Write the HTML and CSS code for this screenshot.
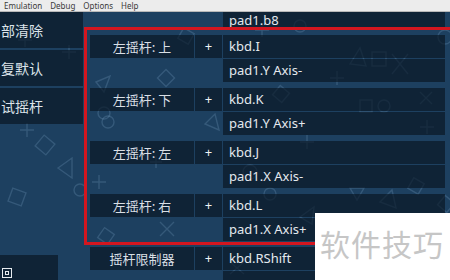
FILE: index.html
```html
<!DOCTYPE html>
<html lang="zh-CN">
<head>
    <meta charset="UTF-8">
    <title>Controls</title>
    <link rel="stylesheet" href="styles.css">
</head>
<body>
    <div class="menubar">
        <span>Emulation</span>
        <span>Debug</span>
        <span>Options</span>
        <span>Help</span>
    </div>
    <div class="main">
        <svg class="pattern" viewBox="0 0 450 268" width="450" height="268">
            <g fill="none" stroke="rgba(150,190,225,0.2)" stroke-width="1.4">
                <path d="M18 28 L32 28 M25 21 L25 35"/>
                <path d="M20 118 L34 118 M27 111 L27 125"/>
                <rect x="38" y="126" width="14" height="14" transform="rotate(40 45 133)"/>
                <path d="M58 156 L72 146 L72 166 Z"/>
                <rect x="10" y="178" width="14" height="14" transform="rotate(20 17 185)"/>
                <path d="M62 40 L76 40 M69 33 L69 47"/>
                <circle cx="104" cy="101" r="6"/>
                <circle cx="108" cy="110" r="6"/>
                <path d="M96 70 L110 64 L104 80 Z"/>
                <rect x="160" y="60" width="12" height="12" transform="rotate(45 166 66)"/>
                <rect x="180" y="18" width="12" height="12" transform="rotate(30 186 24)"/>
                <path d="M92 170 L106 170 M99 163 L99 177"/>
                <circle cx="80" cy="178" r="6"/>
                <path d="M205 112 L215 102 L219 118 Z"/>
                <path d="M160 210 L174 224 M174 210 L160 224"/>
                <rect x="100" y="218" width="12" height="12" transform="rotate(35 106 224)"/>
                <path d="M255 18 L269 18 M262 11 L262 25"/>
                <circle cx="300" cy="14" r="6"/>
                <rect x="372" y="40" width="14" height="14"/>
                <path d="M350 52 L360 36 L366 54 Z"/>
                <path d="M392 42 L408 62 M408 42 L392 62"/>
                <circle cx="445" cy="25" r="7"/>
                <rect x="275" y="76" width="12" height="12" transform="rotate(40 281 82)"/>
                <path d="M330 66 L344 66 M337 59 L337 73"/>
                <rect x="360" y="88" width="12" height="12"/>
                <circle cx="384" cy="94" r="6"/>
                <path d="M420 80 L432 92 M432 80 L420 92"/>
                <path d="M300 130 L314 130 M307 123 L307 137"/>
                <circle cx="250" cy="160" r="7"/>
                <path d="M420 115 L434 115 M427 108 L427 122"/>
                <path d="M350 176 L364 176 L357 188 Z"/>
                <rect x="410" y="168" width="12" height="12" transform="rotate(30 416 174)"/>
                <circle cx="270" cy="182" r="6"/>
                <path d="M300 205 L314 195 L312 212 Z"/>
                <path d="M380 190 L392 178 L396 196 Z"/>
                <rect x="440" y="186" width="12" height="12" transform="rotate(40 446 192)"/>
                <path d="M150 150 L162 150 M156 144 L156 156"/>
                <circle cx="160" cy="245" r="6"/>
                <path d="M230 250 L244 262 M244 250 L230 262"/>
            </g>
        </svg>
        <div class="sidebar">
            <div class="side-btn">部清除</div>
            <div class="side-btn">复默认</div>
            <div class="side-btn">试摇杆</div>
            <div class="side-bottom">
                <span class="restore-icon"></span>
            </div>
        </div>
        <div class="binds">
            <div class="group tail">
                <div class="bind-values">
                    <div class="val partial">pad1.b8</div>
                </div>
            </div>
            <div class="group">
                <div class="bind-label">左摇杆: 上</div>
                <div class="bind-add">+</div>
                <div class="bind-values">
                    <div class="val">kbd.I</div>
                    <div class="val">pad1.Y Axis-</div>
                </div>
            </div>
            <div class="group">
                <div class="bind-label">左摇杆: 下</div>
                <div class="bind-add">+</div>
                <div class="bind-values">
                    <div class="val">kbd.K</div>
                    <div class="val">pad1.Y Axis+</div>
                </div>
            </div>
            <div class="group">
                <div class="bind-label">左摇杆: 左</div>
                <div class="bind-add">+</div>
                <div class="bind-values">
                    <div class="val">kbd.J</div>
                    <div class="val">pad1.X Axis-</div>
                </div>
            </div>
            <div class="group">
                <div class="bind-label">左摇杆: 右</div>
                <div class="bind-add">+</div>
                <div class="bind-values">
                    <div class="val">kbd.L</div>
                    <div class="val">pad1.X Axis+</div>
                </div>
            </div>
            <div class="group">
                <div class="bind-label">摇杆限制器</div>
                <div class="bind-add">+</div>
                <div class="bind-values">
                    <div class="val">kbd.RShift</div>
                    <div class="val"></div>
                </div>
            </div>
        </div>
        <div class="highlight"></div>
        <div class="watermark">软件技巧</div>
    </div>
</body>
</html>
```

FILE: styles.css
```css
body {
    margin: 0;
    width: 450px;
    height: 280px;
    overflow: hidden;
    font-family: 'Noto Sans', 'Noto Sans CJK SC', sans-serif;
    background-color: #1d4060;
}
.menubar {
    height: 11px;
    background-color: #ececec;
    border-bottom: 1px solid #b9b9b9;
    padding-left: 4px;
    font-size: 8px;
    line-height: 11px;
    color: #3a3a3a;
    display: flex;
    gap: 8px;
}
.main {
    position: relative;
    height: 268px;
    display: flex;
    gap: 7px;
    overflow: hidden;
    background-color: #1d4060;
}
.pattern {
    position: absolute;
    left: 0;
    top: 0;
}
.sidebar {
    position: relative;
    width: 83px;
    flex-shrink: 0;
    display: flex;
    flex-direction: column;
    gap: 2px;
}
.side-btn {
    height: 36px;
    line-height: 36px;
    padding-left: 1px;
    font-family: 'Noto Sans CJK SC', sans-serif;
    font-size: 14px;
    color: #dde4ea;
    background-color: rgba(8, 20, 33, 0.65);
    white-space: nowrap;
}
.side-bottom {
    margin-top: auto;
    width: 58px;
    height: 25px;
    background-color: rgba(8, 20, 33, 0.65);
    display: flex;
    align-items: flex-end;
    padding: 0 0 2px 2px;
    box-sizing: border-box;
}
.restore-icon {
    width: 8px;
    height: 8px;
    border: 1px solid #e6ebef;
    display: flex;
    align-items: center;
    justify-content: center;
}
.restore-icon::after {
    content: '';
    width: 4px;
    height: 4px;
    border: 1px solid #e6ebef;
    box-sizing: border-box;
}
.binds {
    position: relative;
    flex: 1;
    display: flex;
    flex-direction: column;
    gap: 6px;
}
.group {
    display: flex;
    gap: 1px;
    align-items: flex-start;
}
.group.tail {
    padding-left: 133px;
}
.bind-label {
    width: 104px;
    height: 23px;
    line-height: 23px;
    text-align: center;
    font-family: 'Noto Sans CJK SC', sans-serif;
    font-size: 13px;
    color: #d9dfe5;
    background-color: rgba(8, 20, 33, 0.65);
}
.bind-add {
    width: 27px;
    height: 23px;
    line-height: 22px;
    text-align: center;
    font-size: 13px;
    color: #eef2f5;
    background-color: rgba(8, 20, 33, 0.65);
}
.bind-values {
    width: 222px;
    display: flex;
    flex-direction: column;
    gap: 1px;
}
.val {
    height: 23px;
    line-height: 23px;
    padding-left: 6px;
    font-size: 13px;
    color: #e4e9ee;
    background-color: rgba(8, 20, 33, 0.65);
}
.val.partial {
    height: 17px;
    line-height: 16px;
}
.highlight {
    position: absolute;
    left: 84px;
    top: 15px;
    width: 380px;
    height: 212px;
    border: 3px solid #d3161f;
}
.watermark {
    position: absolute;
    left: 315px;
    top: 201px;
    width: 135px;
    height: 67px;
    background-color: #ffffff;
    padding: 12px 0 0 5px;
    box-sizing: border-box;
    font-family: 'Noto Sans CJK SC', sans-serif;
    font-size: 30px;
    line-height: 36px;
    color: #c6c6c6;
    letter-spacing: 1px;
    white-space: nowrap;
}
```
